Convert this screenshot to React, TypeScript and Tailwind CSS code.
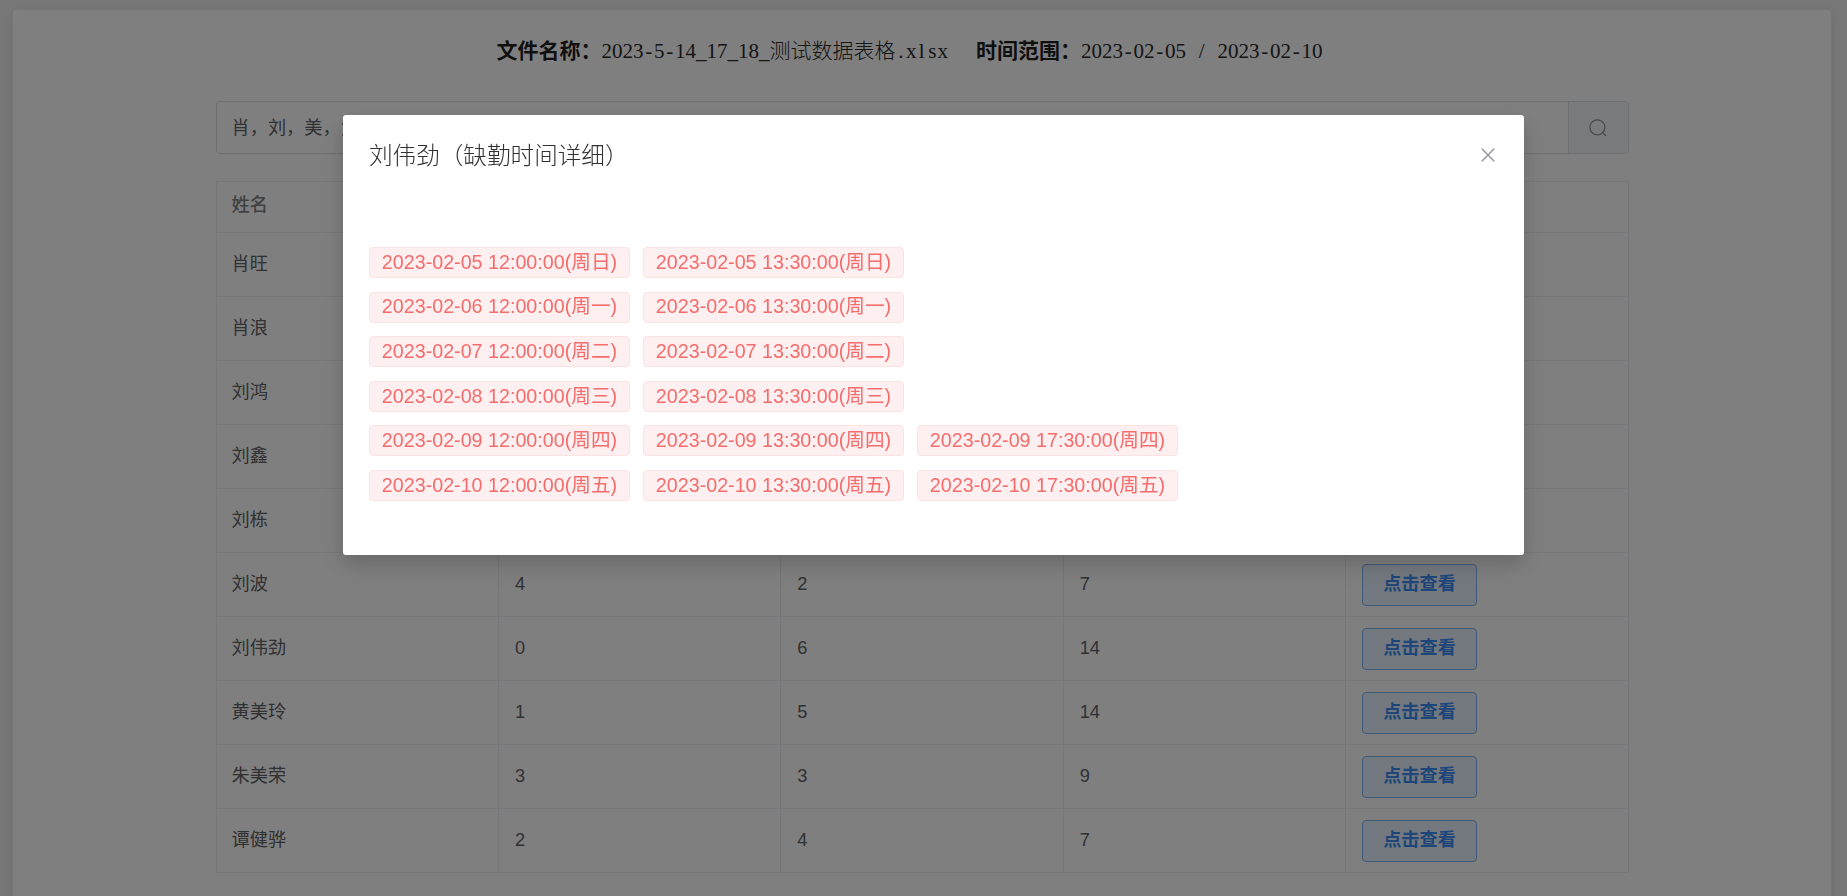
const cjk = '"Liberation Sans", "Noto Sans CJK SC", sans-serif';

function Song({ text }: { text: string }) {
  return (
    <span className="font-normal text-[#2a2a2a] [font-family:'Liberation_Serif','Noto_Sans_CJK_SC',serif]">
      {text.split('').map((c, i) =>
        c.charCodeAt(0) < 128 ? (
          <span key={i} className="inline-block w-[10.5px] text-center whitespace-pre">{c}</span>
        ) : (
          <span key={i} className="font-light">{c}</span>
        )
      )}
    </span>
  );
}

const rows: [string, string, string, string][] = [
  ['肖旺', '', '', ''],
  ['肖浪', '', '', ''],
  ['刘鸿', '', '', ''],
  ['刘鑫', '', '', ''],
  ['刘栋', '', '', ''],
  ['刘波', '4', '2', '7'],
  ['刘伟劲', '0', '6', '14'],
  ['黄美玲', '1', '5', '14'],
  ['朱美荣', '3', '3', '9'],
  ['谭健骅', '2', '4', '7'],
];

const tagRows: string[][] = [
  ['2023-02-05 12:00:00(周日)', '2023-02-05 13:30:00(周日)'],
  ['2023-02-06 12:00:00(周一)', '2023-02-06 13:30:00(周一)'],
  ['2023-02-07 12:00:00(周二)', '2023-02-07 13:30:00(周二)'],
  ['2023-02-08 12:00:00(周三)', '2023-02-08 13:30:00(周三)'],
  ['2023-02-09 12:00:00(周四)', '2023-02-09 13:30:00(周四)', '2023-02-09 17:30:00(周四)'],
  ['2023-02-10 12:00:00(周五)', '2023-02-10 13:30:00(周五)', '2023-02-10 17:30:00(周五)'],
];

const th = 'border border-[#ebeef5] px-[15px] pb-[2px] h-[51px] text-left text-[18.2px] font-medium text-[#7f8185]';
const td = 'border border-[#ebeef5] px-4 h-[64px] text-[18.2px] text-[#606266]';
const tdName = 'border border-[#ebeef5] px-[15px] h-[64px] text-[18.2px] text-[#606266]';

export default function App() {
  return (
    <div className="h-screen overflow-hidden bg-[#f1f1f1]" style={{ fontFamily: cjk }}>
      <div className="ml-[12px] mt-[9px] w-[1820px] min-h-[1000px] rounded-[4px] border border-[#ebeef5] bg-white shadow-[0_2px_12px_rgba(0,0,0,0.1)]">
        <div className="flex h-[91px] items-start justify-center pt-[26px] pr-[25px] text-[21px] leading-[30px]">
          <span className="font-bold text-[#1f1f1f]">文件名称：</span>
          <Song text="2023-5-14_17_18_测试数据表格.xlsx" />
          <span className="ml-[28px] font-bold text-[#1f1f1f]">时间范围：</span>
          <Song text="2023-02-05 / 2023-02-10" />
        </div>
        <div className="mx-auto w-[1413px]">
          <div className="flex h-[53px] rounded-[4px] border border-[#dcdfe6]">
            <input
              readOnly
              value="肖，刘，美，黄，朱，谭"
              className="min-w-0 flex-1 bg-transparent px-[15px] pt-[2px] text-[18.2px] text-[#606266] outline-none"
            />
            <button className="flex w-[60px] items-center justify-center rounded-r-[4px] border-l border-[#dcdfe6] bg-[#f5f7fa] text-[#909399]">
              <svg viewBox="0 0 1024 1024" className="h-[20px] w-[20px]" fill="currentColor">
                <path d="m795.904 750.72 124.992 124.928a32 32 0 0 1-45.248 45.248L750.656 795.904a416 416 0 1 1 45.248-45.248zM480 832a352 352 0 1 0 0-704 352 352 0 0 0 0 704z" />
              </svg>
            </button>
          </div>
          <table className="mt-[27px] w-full table-fixed border-collapse">
            <thead>
              <tr>
                <th className={th}>姓名</th>
                <th className={th}></th>
                <th className={th}></th>
                <th className={th}></th>
                <th className={th}></th>
              </tr>
            </thead>
            <tbody>
              {rows.map((r) => (
                <tr key={r[0]}>
                  <td className={tdName}>{r[0]}</td>
                  <td className={td}>{r[1]}</td>
                  <td className={td}>{r[2]}</td>
                  <td className={td}>{r[3]}</td>
                  <td className={td}>
                    <button className="h-[42px] w-[115px] rounded-[4px] border border-[#7db4f5] bg-[#e8f2ff] text-[18.2px] font-bold text-[#3f8cf0]">
                      点击查看
                    </button>
                  </td>
                </tr>
              ))}
            </tbody>
          </table>
        </div>
      </div>

      <div className="fixed inset-0 bg-black/50 pl-[343px] pt-[115px]">
        <div className="h-[440px] w-[1181px] rounded-[3px] bg-white pl-[26px] pr-[27px] shadow-[0_12px_32px_4px_rgba(0,0,0,0.06),0_8px_20px_rgba(0,0,0,0.14)]">
          <div className="flex h-[132px] items-start justify-between pt-[25px]">
            <span className="text-[23.6px] leading-[32px] font-light text-[#303133]">刘伟劲（缺勤时间详细）</span>
            <button className="mr-[-2px] mt-[4px] text-[#909399]">
              <svg viewBox="0 0 1024 1024" className="h-[22px] w-[22px]" fill="currentColor">
                <path d="M764.288 214.592 512 466.88 259.712 214.592a31.936 31.936 0 0 0-45.12 45.12L466.752 512 214.528 764.224a31.936 31.936 0 1 0 45.12 45.184L512 557.184l252.288 252.288a31.936 31.936 0 0 0 45.12-45.12L557.12 512.064l252.288-252.352a31.936 31.936 0 1 0-45.12-45.184z" />
              </svg>
            </button>
          </div>
          <div className="flex flex-col gap-y-[13.6px]">
            {tagRows.map((row, i) => (
              <div key={i} className="flex gap-x-[13px]">
                {row.map((t) => (
                  <span
                    key={t}
                    className="flex h-[31px] w-[261px] items-center justify-center rounded-[4px] border border-[#fde2e2] bg-[#fef0f0] text-[19.7px] whitespace-nowrap text-[#f56c6c]"
                  >
                    {t}
                  </span>
                ))}
              </div>
            ))}
          </div>
        </div>
      </div>
    </div>
  );
}
